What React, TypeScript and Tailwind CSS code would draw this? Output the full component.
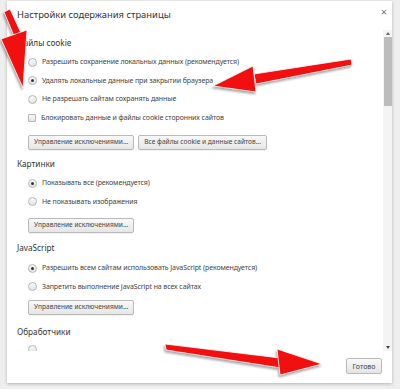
import React from "react";

type Option = { label: string; checked?: boolean; kind?: "radio" | "checkbox" };

const Radio = ({ checked }: { checked?: boolean }) => (
  <span className="flex h-[9px] w-[9px] shrink-0 items-center justify-center rounded-full border border-[#b5b5b5] bg-gradient-to-b from-[#fafafa] to-[#e4e4e4]">
    {checked && <span className="h-[3px] w-[3px] rounded-full bg-[#333]" />}
  </span>
);

const Checkbox = () => (
  <span className="h-[8px] w-[8px] shrink-0 rounded-[1px] border border-[#b5b5b5] bg-gradient-to-b from-[#fafafa] to-[#e4e4e4]" />
);

const Row = ({ option }: { option: Option }) => (
  <div className="flex h-[18.5px] items-center gap-[5px] pl-[11px] text-[7px] tracking-[-0.1px] text-[#444]">
    {option.kind === "checkbox" ? <Checkbox /> : <Radio checked={option.checked} />}
    <span className="whitespace-nowrap">{option.label}</span>
  </div>
);

const Btn = ({ children }: { children: React.ReactNode }) => (
  <button className="h-[15px] rounded-[2px] border border-[#b9b9b9] bg-gradient-to-b from-[#f8f8f8] to-[#e6e6e6] px-[5px] text-[6.6px] leading-none whitespace-nowrap text-[#444] shadow-[0_1px_0_rgba(0,0,0,0.05)]">
    {children}
  </button>
);

const Heading = ({ children, className }: { children: React.ReactNode; className?: string }) => (
  <div className={"h-[16px] text-[8.2px] leading-[16px] text-[#333] " + (className ?? "")}>{children}</div>
);

const Arrows = () => (
  <svg
    className="pointer-events-none absolute inset-0 drop-shadow-[-1px_2px_1px_rgba(0,0,0,0.35)]"
    width="400"
    height="389"
    viewBox="0 0 400 389"
  >
    <g fill="#f20f0f" stroke="#ffffff" strokeWidth="0.8" strokeLinejoin="round">
      <polygon points="4,12 10,9 21,33 14,36" />
      <polygon points="1,39 27,30 23,88" />
      <polygon points="351,59 352,65 256,84 254,74" />
      <polygon points="253,66 256,92 213,86" />
      <polygon points="165,344 166,350 281,368 280,358" />
      <polygon points="277,349 280,375 322,364" />
    </g>
  </svg>
);

export default function App() {
  const cookies: Option[] = [
    { label: "Разрешить сохранение локальных данных (рекомендуется)" },
    { label: "Удалять локальные данные при закрытии браузера", checked: true },
    { label: "Не разрешать сайтам сохранять данные" },
    { label: "Блокировать данные и файлы cookie сторонних сайтов", kind: "checkbox" },
  ];
  const images: Option[] = [
    { label: "Показывать все (рекомендуется)", checked: true },
    { label: "Не показывать изображения" },
  ];
  const js: Option[] = [
    { label: "Разрешить всем сайтам использовать JavaScript (рекомендуется)", checked: true },
    { label: "Запретить выполнение JavaScript на всех сайтах" },
  ];

  return (
    <div
      className="relative h-[389px] w-[400px] overflow-hidden bg-[#eeeeee] pt-[1px] pl-[7px]"
      style={{ fontFamily: '"Noto Sans", "Open Sans", sans-serif' }}
    >
      <div className="flex h-[382px] w-[385px] flex-col bg-white shadow-[0_1px_3px_rgba(0,0,0,0.25)]">
        <div className="flex h-[29px] items-start justify-between pt-[7px] pl-[10px] pr-[5px]">
          <span className="text-[9.4px] leading-[14px] text-[#333]">Настройки содержания страницы</span>
          <span className="text-[11px] leading-[8px] text-[#777]">×</span>
        </div>

        <div className="flex h-[321px] overflow-hidden">
          <div className="flex-1 overflow-hidden pt-[5px] pl-[10px]">
            <Heading>Файлы cookie</Heading>
            <div className="mt-[2px]">
              {cookies.map((o) => (
                <Row key={o.label} option={o} />
              ))}
            </div>
            <div className="mt-[8px] flex gap-[4px] pl-[11px]">
              <Btn>Управление исключениями...</Btn>
              <Btn>Все файлы cookie и данные сайтов...</Btn>
            </div>

            <Heading className="mt-[6px]">Картинки</Heading>
            <div className="mt-[2px]">
              {images.map((o) => (
                <Row key={o.label} option={o} />
              ))}
            </div>
            <div className="mt-[7px] flex pl-[11px]">
              <Btn>Управление исключениями...</Btn>
            </div>

            <Heading className="mt-[7px]">JavaScript</Heading>
            <div className="mt-[3px]">
              {js.map((o) => (
                <Row key={o.label} option={o} />
              ))}
            </div>
            <div className="mt-[4px] flex pl-[11px]">
              <Btn>Управление исключениями...</Btn>
            </div>

            <Heading className="mt-[9px]">Обработчики</Heading>
            <Row option={{ label: "" }} />
          </div>

          <div className="flex w-[9px] flex-col items-center bg-[#f4f4f4]">
            <div className="flex h-[7px] items-center justify-center">
              <span className="h-0 w-0 border-x-[2px] border-b-[3px] border-x-transparent border-b-[#666]" />
            </div>
            <div className="h-[69px] w-[8px] bg-[#bcbcbc]" />
            <div className="flex-1" />
            <div className="flex h-[7px] items-center justify-center">
              <span className="h-0 w-0 border-x-[2px] border-t-[3px] border-x-transparent border-t-[#444]" />
            </div>
          </div>
        </div>

        <div className="flex flex-1 items-start justify-end pt-[7px] pr-[10px]">
          <button className="h-[16px] w-[36px] rounded-[2px] border border-[#b9b9b9] bg-gradient-to-b from-[#f8f8f8] to-[#e4e4e4] text-[7px] leading-none text-[#444]">
            Готово
          </button>
        </div>
      </div>
      <Arrows />
    </div>
  );
}
